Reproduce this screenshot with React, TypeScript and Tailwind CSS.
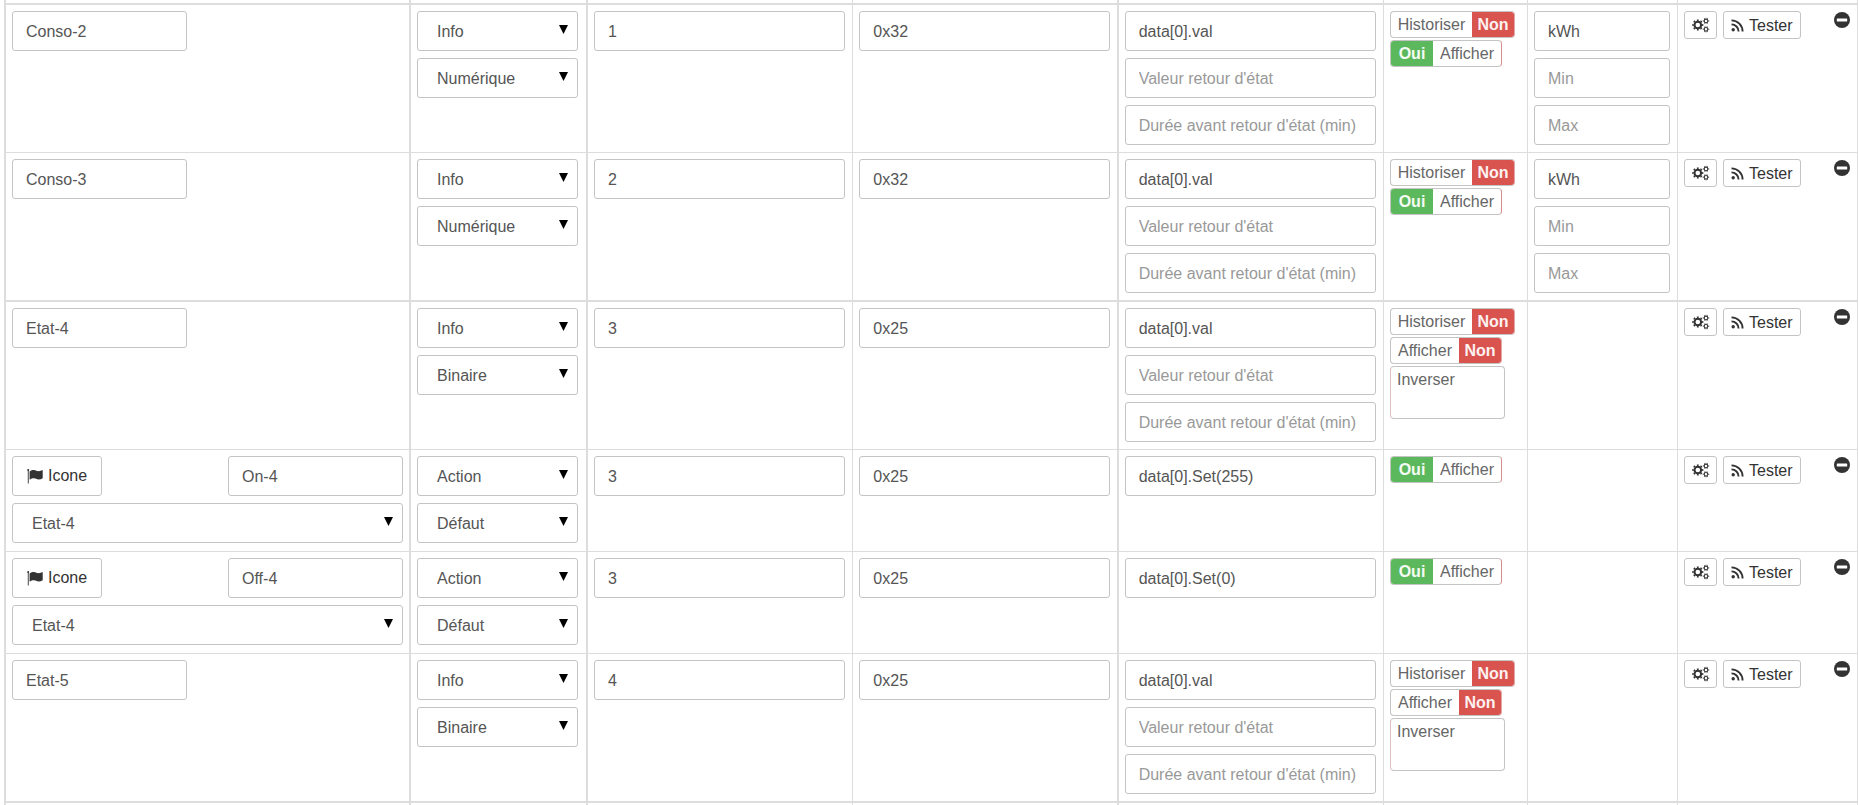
import React from "react";

type Row = {
  name: string;
  icon?: boolean;
  linked?: string;
  type: string;
  subtype: string;
  instance: string;
  cls: string;
  command: string;
  unit?: string;
  info: boolean;
  toggles: ToggleKind[];
  thick?: boolean;
};

type ToggleKind = "historiserNon" | "afficherOui" | "afficherNon" | "inverser";

const rows: Row[] = [
  { name: "Conso-2", type: "Info", subtype: "Numérique", instance: "1", cls: "0x32", command: "data[0].val", unit: "kWh", info: true, toggles: ["historiserNon", "afficherOui"] },
  { name: "Conso-3", type: "Info", subtype: "Numérique", instance: "2", cls: "0x32", command: "data[0].val", unit: "kWh", info: true, toggles: ["historiserNon", "afficherOui"], thick: true },
  { name: "Etat-4", type: "Info", subtype: "Binaire", instance: "3", cls: "0x25", command: "data[0].val", info: true, toggles: ["historiserNon", "afficherNon", "inverser"] },
  { name: "On-4", icon: true, linked: "Etat-4", type: "Action", subtype: "Défaut", instance: "3", cls: "0x25", command: "data[0].Set(255)", info: false, toggles: ["afficherOui"] },
  { name: "Off-4", icon: true, linked: "Etat-4", type: "Action", subtype: "Défaut", instance: "3", cls: "0x25", command: "data[0].Set(0)", info: false, toggles: ["afficherOui"] },
  { name: "Etat-5", type: "Info", subtype: "Binaire", instance: "4", cls: "0x25", command: "data[0].val", info: true, toggles: ["historiserNon", "afficherNon", "inverser"], thick: true },
];

function CogsIcon() {
  return (
    <svg viewBox="0 0 18 16" className="h-4 w-[18px]" fill="none" stroke="currentColor" aria-hidden="true">
      <circle cx="5.8" cy="8" r="3.3" strokeWidth="2" />
      <circle cx="5.8" cy="8" r="4.8" strokeWidth="1.5" pathLength="16" strokeDasharray="1 1" strokeDashoffset="0.5" />
      <circle cx="14" cy="3.9" r="1.8" strokeWidth="1.1" />
      <circle cx="14" cy="3.9" r="2.7" strokeWidth="0.9" pathLength="12" strokeDasharray="1 1" strokeDashoffset="0.5" />
      <circle cx="14" cy="12.3" r="1.8" strokeWidth="1.1" />
      <circle cx="14" cy="12.3" r="2.7" strokeWidth="0.9" pathLength="12" strokeDasharray="1 1" strokeDashoffset="0.5" />
    </svg>
  );
}

function RssIcon() {
  return (
    <svg viewBox="0 0 13 13" className="size-[13px]" fill="none" stroke="currentColor" strokeWidth="1.9" aria-hidden="true">
      <circle cx="2.2" cy="10.8" r="1.7" fill="currentColor" stroke="none" />
      <path d="M0.5 5.4a7.1 7.1 0 0 1 7.1 7.1M0.5 1.4a11.1 11.1 0 0 1 11.1 11.1" />
    </svg>
  );
}

function FlagIcon() {
  return (
    <svg viewBox="0 0 16 16" className="size-4" fill="currentColor" aria-hidden="true">
      <circle cx="1.2" cy="2" r="1" />
      <path d="M0.8 2h0.9v13.5H0.8z" />
      <path d="M2.6 3.4C4.2 2.5 5.5 2 6.8 2c2 0 2.9 1.3 4.9 1.3 1.3 0 2.6-0.5 4-1.2v8.2c-1.4 0.8-2.7 1.2-4 1.2-2 0-2.9-1.2-4.9-1.2-1.3 0-2.6 0.5-4.2 1.4z" />
    </svg>
  );
}

function MinusIcon() {
  return (
    <svg viewBox="0 0 16 16" className="size-4" aria-hidden="true">
      <circle cx="8" cy="8" r="8" fill="currentColor" />
      <rect x="2.8" y="6.5" width="10.4" height="3" rx="0.6" fill="#fff" />
    </svg>
  );
}

function Field({ label, value, className = "w-full" }: { label: string; value?: string; className?: string }) {
  return (
    <input
      type="text"
      aria-label={label}
      placeholder={value === undefined ? label : undefined}
      defaultValue={value}
      className={`block h-10 rounded-[3px] border border-[#c4c4c4] bg-white px-[13px] pt-[2px] text-base text-[#555] placeholder:text-[#999] ${className}`}
    />
  );
}

function Select({ label, value }: { label: string; value: string }) {
  return (
    <div className="relative">
      <select
        aria-label={label}
        defaultValue={value}
        className="block h-10 w-full appearance-none rounded-[3px] border border-[#c4c4c4] bg-white pt-[2px] pr-8 pl-[19px] text-base text-[#555]"
      >
        <option>{value}</option>
      </select>
      <svg viewBox="0 0 9 9" className="pointer-events-none absolute top-[14px] right-[10px] size-[9px]" aria-hidden="true">
        <path d="M0 0h9L4.5 9z" fill="#000" />
      </svg>
    </div>
  );
}

const toggleFrame = "flex h-[27px] overflow-hidden rounded-[4px] border border-[#c4c4c4] text-base leading-[26px] text-[#666]";

function Toggle({ kind }: { kind: ToggleKind }) {
  if (kind === "inverser") {
    return (
      <button type="button" role="switch" aria-checked="false" className="flex h-[53px] w-[115px] items-start rounded-[4px] border border-[#c4c4c4] border-l-[#dcc0c0] px-[6px] text-base leading-[26px] text-[#666]">
        Inverser
      </button>
    );
  }
  if (kind === "afficherOui") {
    return (
      <button type="button" role="switch" aria-checked="true" className={`${toggleFrame} border-r-[#d98d8b]`}>
        <span className="w-[42px] bg-[#5cb85c] text-center font-bold text-[#f4fbf4]">Oui</span>
        <span className="w-[68px] text-center">Afficher</span>
      </button>
    );
  }
  const historiser = kind === "historiserNon";
  return (
    <button type="button" role="switch" aria-checked="false" className={`${toggleFrame} border-r-[#e0a9a7]`}>
      <span className={historiser ? "w-[81px] text-center" : "w-[68px] text-center"}>{historiser ? "Historiser" : "Afficher"}</span>
      <span className="w-[42px] bg-[#d9534f] text-center font-bold text-[#fdf1f1]">Non</span>
    </button>
  );
}

const columns = [
  { width: "w-[407px]", edge: "border-l-2 border-r-2" },
  { width: "w-[177px]", edge: "border-r-2" },
  { width: "", edge: "border-r" },
  { width: "", edge: "border-r-2" },
  { width: "", edge: "border-r" },
  { width: "w-[144px]", edge: "border-r" },
  { width: "w-[150px]", edge: "border-r" },
  { width: "w-[180px]", edge: "border-r" },
];

function Cell({ col, thick, className = "px-[6px]", children }: { col: number; thick?: boolean; className?: string; children?: React.ReactNode }) {
  return (
    <td className={`border-[#ddd] pt-[6px] pb-[7px] align-top ${columns[col].edge} ${thick ? "border-b-2" : "border-b"} ${className}`}>
      <div className="flex flex-col gap-[7px]">{children}</div>
    </td>
  );
}

function CommandRow({ row }: { row: Row }) {
  const t = row.thick;
  const field = "pl-[6px] pr-[7px]";
  return (
    <tr className={row.info ? "" : "h-[102px]"}>
      <Cell col={0} thick={t}>
        {row.icon ? (
          <>
            <div className="flex justify-between">
              <button type="button" className="flex h-10 items-center gap-[5px] rounded-[3px] border border-[#c4c4c4] px-[14px] text-base text-[#333]">
                <FlagIcon />
                Icone
              </button>
              <Field label="Nom" value={row.name} className="w-[175px]" />
            </div>
            <Select label="Commande liée" value={row.linked ?? ""} />
          </>
        ) : (
          <Field label="Nom" value={row.name} className="w-[175px]" />
        )}
      </Cell>
      <Cell col={1} thick={t} className="pl-[6px] pr-2">
        <Select label="Type" value={row.type} />
        <Select label="Sous-type" value={row.subtype} />
      </Cell>
      <Cell col={2} thick={t} className={field}>
        <Field label="Instance" value={row.instance} />
      </Cell>
      <Cell col={3} thick={t} className={field}>
        <Field label="Classe" value={row.cls} />
      </Cell>
      <Cell col={4} thick={t} className={field}>
        <Field label="Commande" value={row.command} />
        {row.info && <Field label="Valeur retour d'état" />}
        {row.info && <Field label="Durée avant retour d'état (min)" />}
      </Cell>
      <Cell col={5} thick={t}>
        <div className="flex flex-col items-start gap-[2px]">
          {row.toggles.map((kind) => (
            <Toggle key={kind} kind={kind} />
          ))}
        </div>
      </Cell>
      <Cell col={6} thick={t} className={field}>
        {row.unit && (
          <>
            <Field label="Unité" value={row.unit} />
            <Field label="Min" />
            <Field label="Max" />
          </>
        )}
      </Cell>
      <Cell col={7} thick={t} className="pl-[6px] pr-[7px]">
        <div className="flex items-start gap-[6px]">
          <button type="button" aria-label="Configurer" className="flex h-7 w-[33px] items-center justify-center rounded-[3px] border border-[#c4c4c4] text-[#333]">
            <CogsIcon />
          </button>
          <button type="button" className="flex h-7 items-center gap-[5px] rounded-[3px] border border-[#c4c4c4] px-[7px] text-base text-[#333]">
            <RssIcon />
            <span className="pt-px">Tester</span>
          </button>
          <button type="button" aria-label="Supprimer" className="mt-px ml-auto text-[#333]">
            <MinusIcon />
          </button>
        </div>
      </Cell>
    </tr>
  );
}

function EdgeRow({ className }: { className: string }) {
  return (
    <tr>
      {columns.map((c, i) => (
        <td key={i} className={`border-[#ddd] p-0 ${c.edge} ${className}`} />
      ))}
    </tr>
  );
}

export default function App() {
  return (
    <main className="bg-white pl-1 font-['Liberation_Sans',Arial,sans-serif] text-base">
      <table className="w-full min-w-[1500px] table-fixed border-separate border-spacing-0">
        <colgroup>
          {columns.map((c, i) => (
            <col key={i} className={c.width} />
          ))}
        </colgroup>
        <tbody>
          <EdgeRow className="h-[5px] border-b-2" />
          {rows.map((row) => (
            <CommandRow key={row.name} row={row} />
          ))}
          <EdgeRow className="h-[2px]" />
        </tbody>
      </table>
    </main>
  );
}
